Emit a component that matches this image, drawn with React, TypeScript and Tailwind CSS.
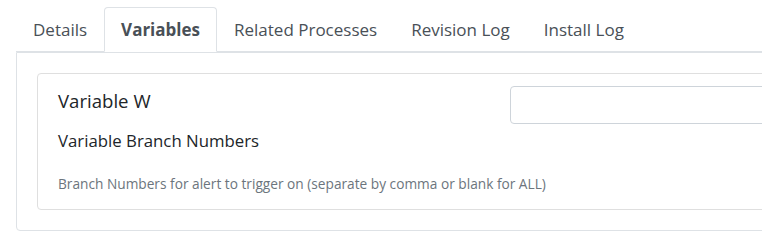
const tabs = ["Details", "Variables", "Related Processes", "Revision Log", "Install Log"];

export default function App() {
  return (
    <div className="h-[251px] w-[762px] overflow-hidden bg-white font-['Open_Sans',sans-serif]">
      <div className="w-[1000px] pl-4 pt-[7px]">
        <ul className="flex border-b border-[#dee2e6]">
          {tabs.map((tab) => (
            <li key={tab} className="-mb-px">
              <span
                className={
                  tab === "Variables"
                    ? "block rounded-t border border-[#dee2e6] border-b-white bg-white px-4 py-2 text-[17px] leading-[27px] font-bold text-[#495057]"
                    : "block border border-transparent px-4 py-2 text-[17px] leading-[27px] text-[#495057]"
                }
              >
                {tab}
              </span>
            </li>
          ))}
        </ul>
        <div className="h-[179px] rounded-b border border-[#dee2e6] p-5">
          <div className="flex h-[137px] rounded border border-[#dfdfdf] px-5 pt-3">
            <div className="w-[452px] shrink-0">
              <div className="text-[18.6px] leading-[30px] text-[#212529]">Variable W</div>
              <div className="mt-[13px] text-[16.8px] leading-6 text-[#212529]">Variable Branch Numbers</div>
              <div className="mt-[22px] whitespace-nowrap text-[13.7px] leading-[18px] text-[#6c757d]">
                Branch Numbers for alert to trigger on (separate by comma or blank for ALL)
              </div>
            </div>
            <input className="h-[38px] flex-1 rounded border border-[#ced4da] bg-white" />
          </div>
        </div>
      </div>
    </div>
  );
}
